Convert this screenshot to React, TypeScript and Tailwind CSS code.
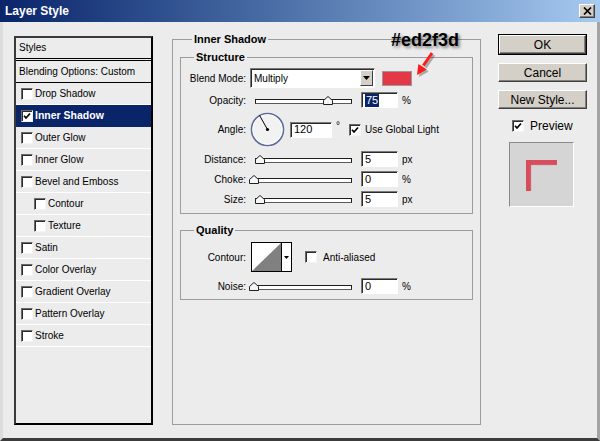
import type { ReactNode } from "react"

const styles = [
  { label: "Drop Shadow" },
  { label: "Inner Shadow", checked: true, active: true },
  { label: "Outer Glow" },
  { label: "Inner Glow" },
  { label: "Bevel and Emboss" },
  { label: "Contour", indent: true },
  { label: "Texture", indent: true },
  { label: "Satin" },
  { label: "Color Overlay" },
  { label: "Gradient Overlay" },
  { label: "Pattern Overlay" },
  { label: "Stroke" },
]

function Checkbox({ checked }: { checked?: boolean }) {
  return (
    <span className="flex h-[12px] w-[12px] shrink-0 items-center justify-center border border-t-[#6a6a6a] border-l-[#6a6a6a] border-r-[#f4f4f4] border-b-[#f4f4f4] bg-white shadow-[inset_1px_1px_0_#2c2c2c]">
      {checked && (
        <svg viewBox="0 0 8 8" className="h-[8px] w-[8px]">
          <path d="M1 3.8 L3 6 L7 1.5" stroke="black" strokeWidth="1.7" fill="none" />
        </svg>
      )}
    </span>
  )
}

function Slider({ pos }: { pos: number }) {
  return (
    <div className="relative ml-[9px] h-[9px] w-[97px]">
      <div className="mt-[3px] h-[5px] w-full border border-[#1e1e1e] border-b-[#5a5a5a] bg-white" />
      <svg className="absolute top-0 h-[9px] w-[10px]" style={{ left: pos - 5 }} viewBox="0 0 10 9">
        <path d="M0.5 8.5 V4.5 L5 0.5 L9.5 4.5 V8.5 Z" fill="#f6f6f6" stroke="#202020" strokeWidth="1" />
      </svg>
    </div>
  )
}

function Field({ value, selected, className = "w-[37px]" }: { value: string; selected?: boolean; className?: string }) {
  return (
    <div
      className={`flex h-[16px] items-center border border-t-[#7a7a7a] border-l-[#7a7a7a] border-r-white border-b-white bg-white pl-[3px] text-[11px] leading-none shadow-[inset_1px_1px_0_#2a2a2a] ${className}`}
    >
      <span className={selected ? "bg-[#0a246a] px-[1px] py-[1px] text-white" : ""}>{value}</span>
    </div>
  )
}

function Label({ children }: { children: ReactNode }) {
  return <span className="w-[65px] shrink-0 text-right">{children}</span>
}

function SliderRow({ label, pos, value, unit, selected }: { label: string; pos: number; value: string; unit: string; selected?: boolean }) {
  return (
    <div className="mt-[4px] flex h-[16px] items-center">
      <Label>{label}</Label>
      <Slider pos={pos} />
      <div className="ml-[9px]">
        <Field value={value} selected={selected} />
      </div>
      <span className="ml-[4px]">{unit}</span>
    </div>
  )
}

function WinButton({ children, primary }: { children: ReactNode; primary?: boolean }) {
  const inner = (
    <div className="flex h-[19px] w-full items-center justify-center border border-t-white border-l-white border-r-[#404040] border-b-[#404040] bg-[#d4d0c8] text-[12px] shadow-[inset_-1px_-1px_0_#808080]">
      {children}
    </div>
  )
  if (primary) return <div className="w-[89px] border border-black">{inner}</div>
  return <div className="w-[89px]">{inner}</div>
}

export default function App() {
  return (
    <div className="relative flex h-[441px] w-[600px] flex-col overflow-hidden bg-[#ececec] font-['Liberation_Sans',Arial,sans-serif] text-[10px] text-black">
      {/* title bar */}
      <div className="flex h-[22px] shrink-0 items-center justify-between bg-linear-to-r from-[#0a246a] to-[#a6caf0] pl-[5px] pr-[5px]">
        <span className="text-[12px] font-bold text-white">Layer Style</span>
        <div className="flex h-[14px] w-[16px] items-center justify-center border border-t-white border-l-white border-r-[#404040] border-b-[#404040] bg-[#d4d0c8] shadow-[inset_-1px_-1px_0_#808080]">
          <svg viewBox="0 0 9 8" className="h-[8px] w-[9px]">
            <path d="M1 0.5 L8 7.5 M8 0.5 L1 7.5" stroke="black" strokeWidth="1.7" />
          </svg>
        </div>
      </div>

      <div className="flex flex-1 items-start border-b-[3px] border-l-[3px] border-r-[3px] border-b-[#3c3c3c] border-l-[#dcdcdc] border-r-[#a4a4a4]">
        {/* styles list */}
        <div className="ml-[11px] mt-[14px] flex h-[389px] w-[139px] flex-col border-2 border-t-[#3a3a3a] border-l-[#3a3a3a] border-r-black border-b-black">
          <div className="flex h-[23px] items-center border-b-[3px] border-double border-b-black pb-[1px] pl-[3px]">Styles</div>
          <div className="flex h-[22px] items-center border-b border-b-black pl-[3px]">Blending Options: Custom</div>
          {styles.map((s) => (
            <div
              key={s.label}
              className={`flex h-[22px] items-center gap-[2px] border-b ${s.indent ? "pl-[18px]" : "pl-[5px]"} ${
                s.active ? "border-b-[#0a246a] bg-[#0a246a] text-[10.5px] font-bold text-white" : "border-b-white"
              }`}
            >
              <Checkbox checked={s.checked} />
              <span>{s.label}</span>
            </div>
          ))}
        </div>

        {/* inner shadow settings */}
        <fieldset className="ml-[19px] mt-[11px] h-[392px] w-[309px] border border-[#9c9c9c] px-[7px]">
          <legend className="ml-[12px] px-[2px] text-[11px] font-bold leading-[13px]">Inner Shadow</legend>

          <fieldset className="mt-[5px] border border-[#9c9c9c] pb-[6px]">
            <legend className="ml-[13px] px-[2px] text-[11px] font-bold leading-[13px]">Structure</legend>

            <div className="mt-[4px] flex h-[20px] items-center">
              <Label>Blend Mode:</Label>
              <div className="ml-[4px] flex h-[20px] w-[125px] items-center justify-between border border-t-[#7a7a7a] border-l-[#7a7a7a] border-r-white border-b-white bg-white shadow-[inset_1px_1px_0_#2a2a2a]">
                <span className="pl-[3px]">Multiply</span>
                <div className="mr-[1px] flex h-[16px] w-[13px] items-center justify-center border border-t-white border-l-white border-r-[#404040] border-b-[#404040] bg-[#d4d0c8]">
                  <svg viewBox="0 0 7 4" className="h-[4px] w-[7px]">
                    <path d="M0 0 H7 L3.5 4 Z" fill="black" />
                  </svg>
                </div>
              </div>
              <div className="ml-[7px] h-[15px] w-[30px] border border-[#9a9a9a] bg-[#e43847]" />
            </div>

            <SliderRow label="Opacity:" pos={73} value="75" unit="%" selected />

            <div className="mt-[4px] flex h-[35px] items-center">
              <Label>Angle:</Label>
              <svg viewBox="0 0 35 35" className="ml-[4px] h-[35px] w-[35px]">
                <circle cx="17.5" cy="17.5" r="16" fill="#f2f2f2" stroke="#5d6c99" strokeWidth="1.6" />
                <circle cx="17.5" cy="17.5" r="14.8" fill="none" stroke="#ffffff" strokeWidth="0.8" />
                <path d="M17.5 17.5 L9.5 3.3" stroke="black" strokeWidth="1" />
                <circle cx="17.5" cy="17.5" r="1.6" fill="black" />
              </svg>
              <div className="ml-[5px]">
                <Field value="120" className="w-[42px]" />
              </div>
              <span className="-mt-[9px] ml-[4px]">°</span>
              <div className="ml-[9px] flex items-center gap-[4px]">
                <Checkbox checked />
                <span>Use Global Light</span>
              </div>
            </div>

            <SliderRow label="Distance:" pos={5} value="5" unit="px" />
            <SliderRow label="Choke:" pos={-1} value="0" unit="%" />
            <SliderRow label="Size:" pos={5} value="5" unit="px" />
          </fieldset>

          <fieldset className="mt-[10px] border border-[#9c9c9c] pb-[5px]">
            <legend className="ml-[13px] px-[2px] text-[11px] font-bold leading-[13px]">Quality</legend>

            <div className="mt-[5px] flex h-[30px] items-center">
              <Label>Contour:</Label>
              <div className="ml-[5px] flex h-[30px] w-[41px] border border-black bg-white">
                <svg viewBox="0 0 29 28" className="h-[28px] w-[29px]">
                  <path d="M0 28 L29 0 V28 Z" fill="#808080" />
                </svg>
                <div className="flex flex-1 items-center justify-center border-l border-l-black">
                  <svg viewBox="0 0 5 3" className="h-[3px] w-[5px]">
                    <path d="M0 0 H5 L2.5 3 Z" fill="black" />
                  </svg>
                </div>
              </div>
              <div className="ml-[13px] flex items-center gap-[6px]">
                <Checkbox />
                <span>Anti-aliased</span>
              </div>
            </div>

            <div className="mt-[6px] flex h-[16px] items-center">
              <Label>Noise:</Label>
              <Slider pos={-1} />
              <div className="ml-[9px]">
                <Field value="0" />
              </div>
              <span className="ml-[4px]">%</span>
            </div>
          </fieldset>
        </fieldset>

        {/* buttons and preview */}
        <div className="ml-[17px] mt-[12px] flex flex-col">
          <WinButton primary>OK</WinButton>
          <div className="mt-[8px]">
            <WinButton>Cancel</WinButton>
          </div>
          <div className="mt-[8px]">
            <WinButton>New Style...</WinButton>
          </div>
          <div className="ml-[14px] mt-[8px] flex items-center gap-[6px] text-[12px]">
            <Checkbox checked />
            <span>Preview</span>
          </div>
          <div className="ml-[11px] mt-[7px] h-[65px] w-[65px] border border-t-[#8a8a8a] border-l-[#8a8a8a] border-r-white border-b-white bg-[#d5d5d5] pl-[16px] pt-[17px]">
            <div className="h-[31px] w-[31px] shadow-[inset_5px_5px_1px_rgba(214,62,78,0.9)]" />
          </div>
        </div>
      </div>

      {/* annotation over the dialog */}
      <span className="absolute left-[391px] top-[27px] text-[18px] font-bold [text-shadow:2px_2px_3px_rgba(0,0,0,0.45)]">
        #ed2f3d
      </span>
      <svg className="absolute left-[412px] top-[50px] h-[28px] w-[28px]" viewBox="0 0 28 28">
        <g transform="translate(2 2)" opacity="0.35">
          <path d="M20 3 L11.4 15.5" stroke="#333" strokeWidth="3" />
          <path d="M5 25 L6.4 13.9 L14.8 19.5 Z" fill="#333" />
        </g>
        <path d="M20 3 L11.4 15.5" stroke="#ff1a1a" strokeWidth="3" />
        <path d="M5 25 L6.4 13.9 L14.8 19.5 Z" fill="#ff1a1a" />
      </svg>
    </div>
  )
}
